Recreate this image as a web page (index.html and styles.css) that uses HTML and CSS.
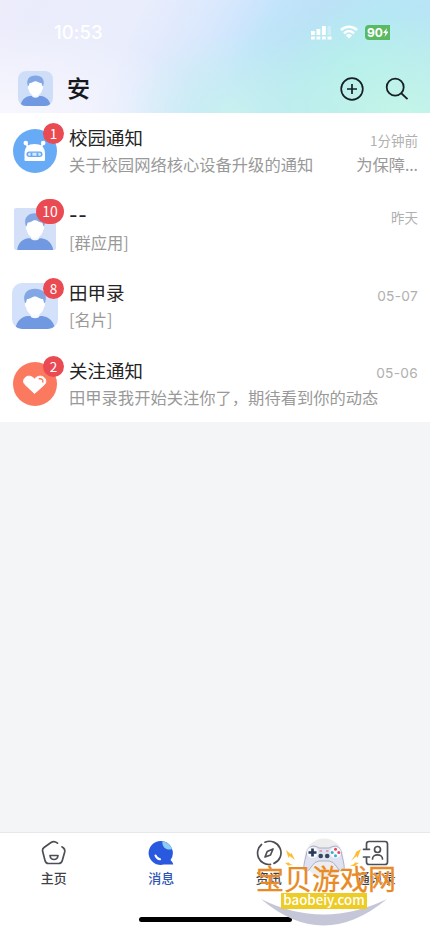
FILE: index.html
```html
<!DOCTYPE html>
<html lang="zh-CN">
<head>
<meta charset="utf-8">
<title>消息</title>
<link rel="stylesheet" href="styles.css">
</head>
<body>
<svg class="defs" width="0" height="0">
  <symbol id="person" viewBox="0 0 46 46">
    <path d="M3.500 46C4 38 10 33.500 16 33H30C37 33.500 42 39 43 46Z" fill="#7199e2"/>
    <path d="M18.500 28H27.500V33C27 36 19 36 18.500 33Z" fill="#f4f8ff"/>
    <path d="M13 20C10 11 15 5.800 23 5.800C31 5.800 36 11 33 20Z" fill="#83a6e4"/>
    <path d="M15 16C19 16 20 13.500 23 13.500C26 13.500 27 16 31 16L32 19.500C33.500 20 33.500 23.500 32 24C31 29.500 27.500 32.500 23 32.500C18.500 32.500 15 29.500 14 24C12.500 23.500 12.500 20 14 19.500Z" fill="#fff"/>
  </symbol>
</svg>
<div class="app">
  <header class="top">
    <div class="status">
      <span class="clock">10:53</span>
      <div class="signals">
        <svg width="23" height="15" viewBox="0 0 23 15" fill="#fff"><rect x="1" y="6" width="3.800" height="4"/><rect x="6.500" y="4" width="3.800" height="6"/><rect x="12" y="1" width="3.800" height="9"/><rect x="17.500" y="1" width="3.500" height="9" opacity=".3"/><rect x="1" y="11.500" width="3.800" height="3"/><rect x="6.500" y="11.500" width="3.800" height="3"/><rect x="12" y="11.500" width="3.800" height="3"/><rect x="17.500" y="11.500" width="4" height="3"/></svg>
        <svg width="18" height="14" viewBox="0 0 18 14" fill="none" stroke="#fff" stroke-width="2.500"><path d="M1 5C5.500.500 12.500.500 17 5M4 8.300C7 5.500 11 5.500 14 8.300"/><path d="M5.800 10.200Q9 7.800 12.200 10.200L9 13.500Z" fill="#fff" stroke="none"/></svg>
        <span class="battery">90<svg width="5" height="9" viewBox="0 0 5 9"><path d="M4 0L0 5H2.500L1.500 9L5 4.500V3.500H3.200Z" fill="#fff"/></svg></span>
      </div>
    </div>
    <div class="titlebar">
      <span class="me"><svg width="35" height="35"><use href="#person"/></svg></span>
      <h1>安</h1>
      <svg class="add" width="24" height="24" viewBox="0 0 24 24" fill="none" stroke="#172026" stroke-width="1.700"><circle cx="12" cy="12" r="10.800"/><path d="M12 7V17M7 12H17"/></svg>
      <svg width="24" height="24" viewBox="0 0 24 24" fill="none" stroke="#172026" stroke-width="1.800"><circle cx="10.200" cy="10.200" r="8.500"/><path d="M16 16L22.500 22.200"/></svg>
    </div>
  </header>
  <main class="list">
    <article class="row">
      <div class="face round blue"><svg width="44" height="44" viewBox="0 0 44 44"><path d="M12.500 14L15 18M30.500 14L28 18" stroke="#fff" stroke-width="2"/><circle cx="12.800" cy="14" r="2.300" fill="#fff"/><circle cx="30.200" cy="14" r="2.300" fill="#fff"/><path d="M11.500 31V25C11.500 18 15 15 21.500 15S32 18 32 25V31Q32 32 31 32H12.500Q11.500 32 11.500 31Z" fill="#fff"/><rect x="13.500" y="22.500" width="16" height="5.500" rx="2.700" fill="#67a9f5"/><rect x="15" y="23.800" width="13" height="3" rx="1.500" fill="#d9eaff"/><path d="M18.500 23.500V27M24.500 23.500V27" stroke="#67a9f5" stroke-width="1.800"/></svg><b class="badge">1</b></div>
      <div class="body"><div class="line"><h2>校园通知</h2><time>1分钟前</time></div><p><span>关于校园网络核心设备升级的通知</span><span>为保障<span class="dots">…</span></span></p></div>
    </article>
    <article class="row">
      <div class="face square"><svg width="42" height="42"><use href="#person"/></svg><b class="badge wide">10</b></div>
      <div class="body"><div class="line"><h2 class="dashes">--</h2><time>昨天</time></div><p>[群应用]</p></div>
    </article>
    <article class="row">
      <div class="face soft"><svg width="46" height="46"><use href="#person"/></svg><b class="badge">8</b></div>
      <div class="body"><div class="line"><h2>田甲录</h2><time class="date">05-07</time></div><p>[名片]</p></div>
    </article>
    <article class="row">
      <div class="face round red"><svg width="44" height="44" viewBox="0 0 44 44"><path d="M21.500 31.500L12 22.500C7.500 17.500 15 10 21.500 17C28 10 36 17.500 31.500 22.500Z" fill="#fff" stroke="#fff" stroke-linejoin="round"/><path d="M26.300 16.800C29 16.300 30.300 18 29.800 20" fill="none" stroke="#fa795f" stroke-width="1.400" stroke-linecap="round"/></svg><b class="badge">2</b></div>
      <div class="body"><div class="line"><h2>关注通知</h2><time class="date">05-06</time></div><p>田甲录我开始关注你了，期待看到你的动态</p></div>
    </article>
  </main>
  <footer>
    <nav>
      <a><svg width="28" height="26" viewBox="0 0 28 26" fill="none" stroke="#4c4f55" stroke-width="1.700" stroke-linejoin="round" stroke-linecap="round"><path d="M17.500 3.200Q14 .200 11 2.500L4 7.500Q2 9 2.700 11.500L5 20.500Q5.700 23.500 8.500 23.500H18.500Q21.500 23.500 22.300 20.500L24.700 12Q25.200 9.500 23.500 8L22 6.800"/><path d="M10 15.500H18Q17.500 19.500 14 19.500T10 15.500Z"/></svg><span>主页</span></a>
      <a class="active"><svg width="28" height="26" viewBox="0 0 28 26"><path d="M14 1A12 12 0 1 0 17 24.500H26Q27 23.500 23.500 20A12 12 0 0 0 14 1Z" fill="#2859df"/><path d="M15.500 1.200A12 12 0 0 1 25 9C20 11 14.500 7 15.500 1.200Z" fill="#8dccf5"/><path d="M8.500 15.500Q10 18.800 13 19.300" stroke="#fff" stroke-width="2" fill="none" stroke-linecap="round"/></svg><span>消息</span></a>
      <a><svg width="28" height="26" viewBox="0 0 28 26" fill="none" stroke="#4c4f55" stroke-width="1.700" stroke-linecap="round"><path d="M10 2.200A11.400 11.400 0 0 1 19 23.400M15.500 24.400A11.400 11.400 0 0 1 6.500 4.500"/><path d="M18 9L15.500 15L10 17L12.200 11.500Z" stroke-linejoin="round"/></svg><span>资讯</span></a>
      <a><svg width="28" height="26" viewBox="0 0 28 26" fill="none" stroke="#4c4f55" stroke-width="1.700" stroke-linecap="round"><path d="M4.500 8V4Q4.500 1.500 7 1.500H23Q25.500 1.500 25.500 4V22Q25.500 24.500 23 24.500H7Q4.500 24.500 4.500 22V18M1.500 9.300H7.500M1.500 17H7.500"/><circle cx="15.500" cy="9.500" r="3"/><path d="M10.500 19C10.500 13.500 20.500 13.500 20.500 19"/></svg><span>通讯录</span></a>
    </nav>
    <div class="home"></div>
    <div class="stamp">
      <svg class="art" width="146" height="96" viewBox="0 0 146 96">
        <circle cx="71" cy="21" r="19.500" fill="#ededee"/>
        <path d="M8 62Q70 93 134 62Q70 115 8 62Z" fill="#c5c7d9"/>
        <path d="M53 19Q54 10 60 9Q64 9 66 11H76Q79 9 83 9Q88 10 89 19Q92 29 91 33Q87 36 84 30Q80 24 76 24H66Q62 24 58 30Q55 36 51 33Q50 29 53 19Z" fill="#dfe2f0" stroke="#9298b4" stroke-width=".7"/>
        <circle cx="59.500" cy="15.500" r="5.500" fill="#f8f9fd"/><circle cx="82.500" cy="15.500" r="5.500" fill="#f8f9fd"/>
        <path d="M59.500 11.500V19.500M55.500 15.500H63.500" stroke="#263a58" stroke-width="2.700"/>
        <circle cx="82.500" cy="12.200" r="1.500" fill="#e34a54"/><circle cx="82.500" cy="18.800" r="1.500" fill="#37aecb"/><circle cx="79.200" cy="15.500" r="1.500" fill="#37aecb"/><circle cx="85.800" cy="15.500" r="1.500" fill="#e34a54"/>
        <circle cx="67.700" cy="19" r="2.300" fill="#35475c"/><circle cx="74.200" cy="19" r="2.300" fill="#35475c"/><path d="M66.500 14H69M73 14H75.500" stroke="#e36068"/>
        <path d="M33 13L37.500 17L38.500 16L42 23L36.500 19L35.500 21ZM32 26L36 25.500L37 27L40 28L35 28.500L34 27.500ZM108 12L103 15L102 18L98 24L103.500 19L104.500 21ZM106 26L102 25.500L101 27L97 29L102 29L103 28Z" fill="#ffbd32"/>
      </svg>
      <div class="brand">宝贝游戏网</div>
      <div class="domain">baobeiy.com</div>
    </div>
  </footer>
</div>
</body>
</html>
```
FILE: styles.css
```css
* { box-sizing: border-box; }
body { margin: 0; background: #f4f5f7; font-family: "Noto Sans CJK SC", sans-serif; }
h1, h2, p { margin: 0; font-weight: 400; }
svg { display: block; flex: none; }
.defs { position: absolute; }
.app { width: 430px; height: 931px; display: flex; flex-direction: column; overflow: hidden; }
.top {
  height: 113px; flex: none;
  background:
    radial-gradient(ellipse 180px 100px at 94% 100%, #c4f5e8 0, #c4f5e800 100%),
    radial-gradient(ellipse 140px 100px at 85% 65%, #afeced 0, #afeced00 100%),
    radial-gradient(ellipse 110px 80px at 54% 100%, #c8f0f0 0, #c8f0f000 100%),
    radial-gradient(ellipse 200px 90px at 0 100%, #f8f7ff 0, #f8f7ff00 100%),
    linear-gradient(118deg, #ececfb 0, #e9edfc 30%, #dae8fd 45%, #c4e4fc 57%, #c2defb 66%, #b9e5f8 80%, #c0dffa 100%);
}
.status { height: 64px; padding: 0 40px 0 54px; display: flex; align-items: center; justify-content: space-between; font-family: Inter, sans-serif; }
.clock { color: #fff; font-size: 18.500px; font-weight: 500; letter-spacing: .1px; }
.signals { display: flex; align-items: center; gap: 7px; }
.battery { height: 15px; width: 25px; display: flex; align-items: center; justify-content: center; border-radius: 4px 0 0 4px; background: #5ab963; color: #fff; font-size: 12px; font-weight: 700; }
.titlebar { height: 49px; padding: 0 21px 0 18px; display: flex; align-items: center; }
.me { border-radius: 8px; overflow: hidden; background: #cfdef8; }
h1 { flex: 1; margin: -3px 0 0 14px; font-size: 23px; line-height: 34px; font-weight: 500; color: #15181b; -webkit-text-stroke: .2px; }
.add { margin-right: 21px; }
.list { flex: none; height: 308.500px; background: #fff; display: grid; grid-template-rows: repeat(4, 77.500px); }
.row { display: flex; padding-left: 12px; padding-right: 12px; }
.face { position: relative; width: 46px; height: 46px; margin: 15px 11px 0 0; flex: none; display: grid; place-items: center; }
.round::before { content: ""; grid-area: 1 / 1; width: 44px; height: 44px; border-radius: 50%; background: #67aaf5; }
.round svg { grid-area: 1 / 1; }
.red::before { background: #fa795f; }
.square svg { background: #d4e0f8; border-radius: 2px; }
.soft svg { background: #d3e1fa; border-radius: 10px; }
.badge { position: absolute; top: -5px; right: -6px; height: 21px; min-width: 21px; border-radius: 11px; background: #ea4a51; color: #fff; font-size: 13.500px; line-height: 20px; text-align: center; font-weight: 400; }
.wide { width: 28px; height: 25px; line-height: 24px; top: -7px; border-radius: 13px; font-size: 14px; }
.body { flex: 1; min-width: 0; padding-top: 11px; }
.line { height: 27px; display: flex; align-items: center; justify-content: space-between; }
h2 { font-size: 18.500px; line-height: 27px; color: #242424; }
.dashes { font-family: Inter, sans-serif; letter-spacing: .8px; font-weight: 500; }
time { font-size: 13.500px; line-height: 20px; color: #b0b0b0; margin-top: 4px; }
.date { font-family: Inter, sans-serif; font-size: 13.700px; letter-spacing: .3px; margin-top: 6px; }
p { font-size: 16.300px; line-height: 27px; color: #999; white-space: nowrap; display: flex; justify-content: space-between; }
.dots { font-family: "Noto Sans", sans-serif; line-height: 1; letter-spacing: 1px; margin-right: -1px; }
footer { position: relative; height: 99px; margin-top: auto; background: #fff; border-top: 1px solid #e6e8eb; display: flex; flex-direction: column; }
nav { height: 84px; display: grid; grid-template-columns: repeat(4, 1fr); padding-top: 7px; }
nav a { display: flex; flex-direction: column; align-items: center; font-size: 13px; line-height: 20px; gap: 2px; color: #404247; font-weight: 500; }
nav .active { color: #3056b5; }
.home { width: 153px; height: 5px; border-radius: 3px; background: #000; margin: 0 auto; }
.stamp { position: absolute; left: 253px; top: 4px; width: 146px; height: 94px; display: flex; flex-direction: column; align-items: center; }
.art { position: absolute; left: 0; top: 0; }
.brand { position: relative; margin-top: 23px; font-size: 28px; line-height: 37px; white-space: nowrap; color: #e98b24; font-weight: 400; -webkit-text-stroke: .3px #e98b24; text-shadow: 0 0 1px #fff; }
.domain { position: relative; width: 86px; height: 16px; margin-left: -4px; margin-top: -4px; background: #edcc25; color: #fff; font: 500 13.300px/14px "Noto Sans CJK SC", sans-serif; text-align: center; }
```
